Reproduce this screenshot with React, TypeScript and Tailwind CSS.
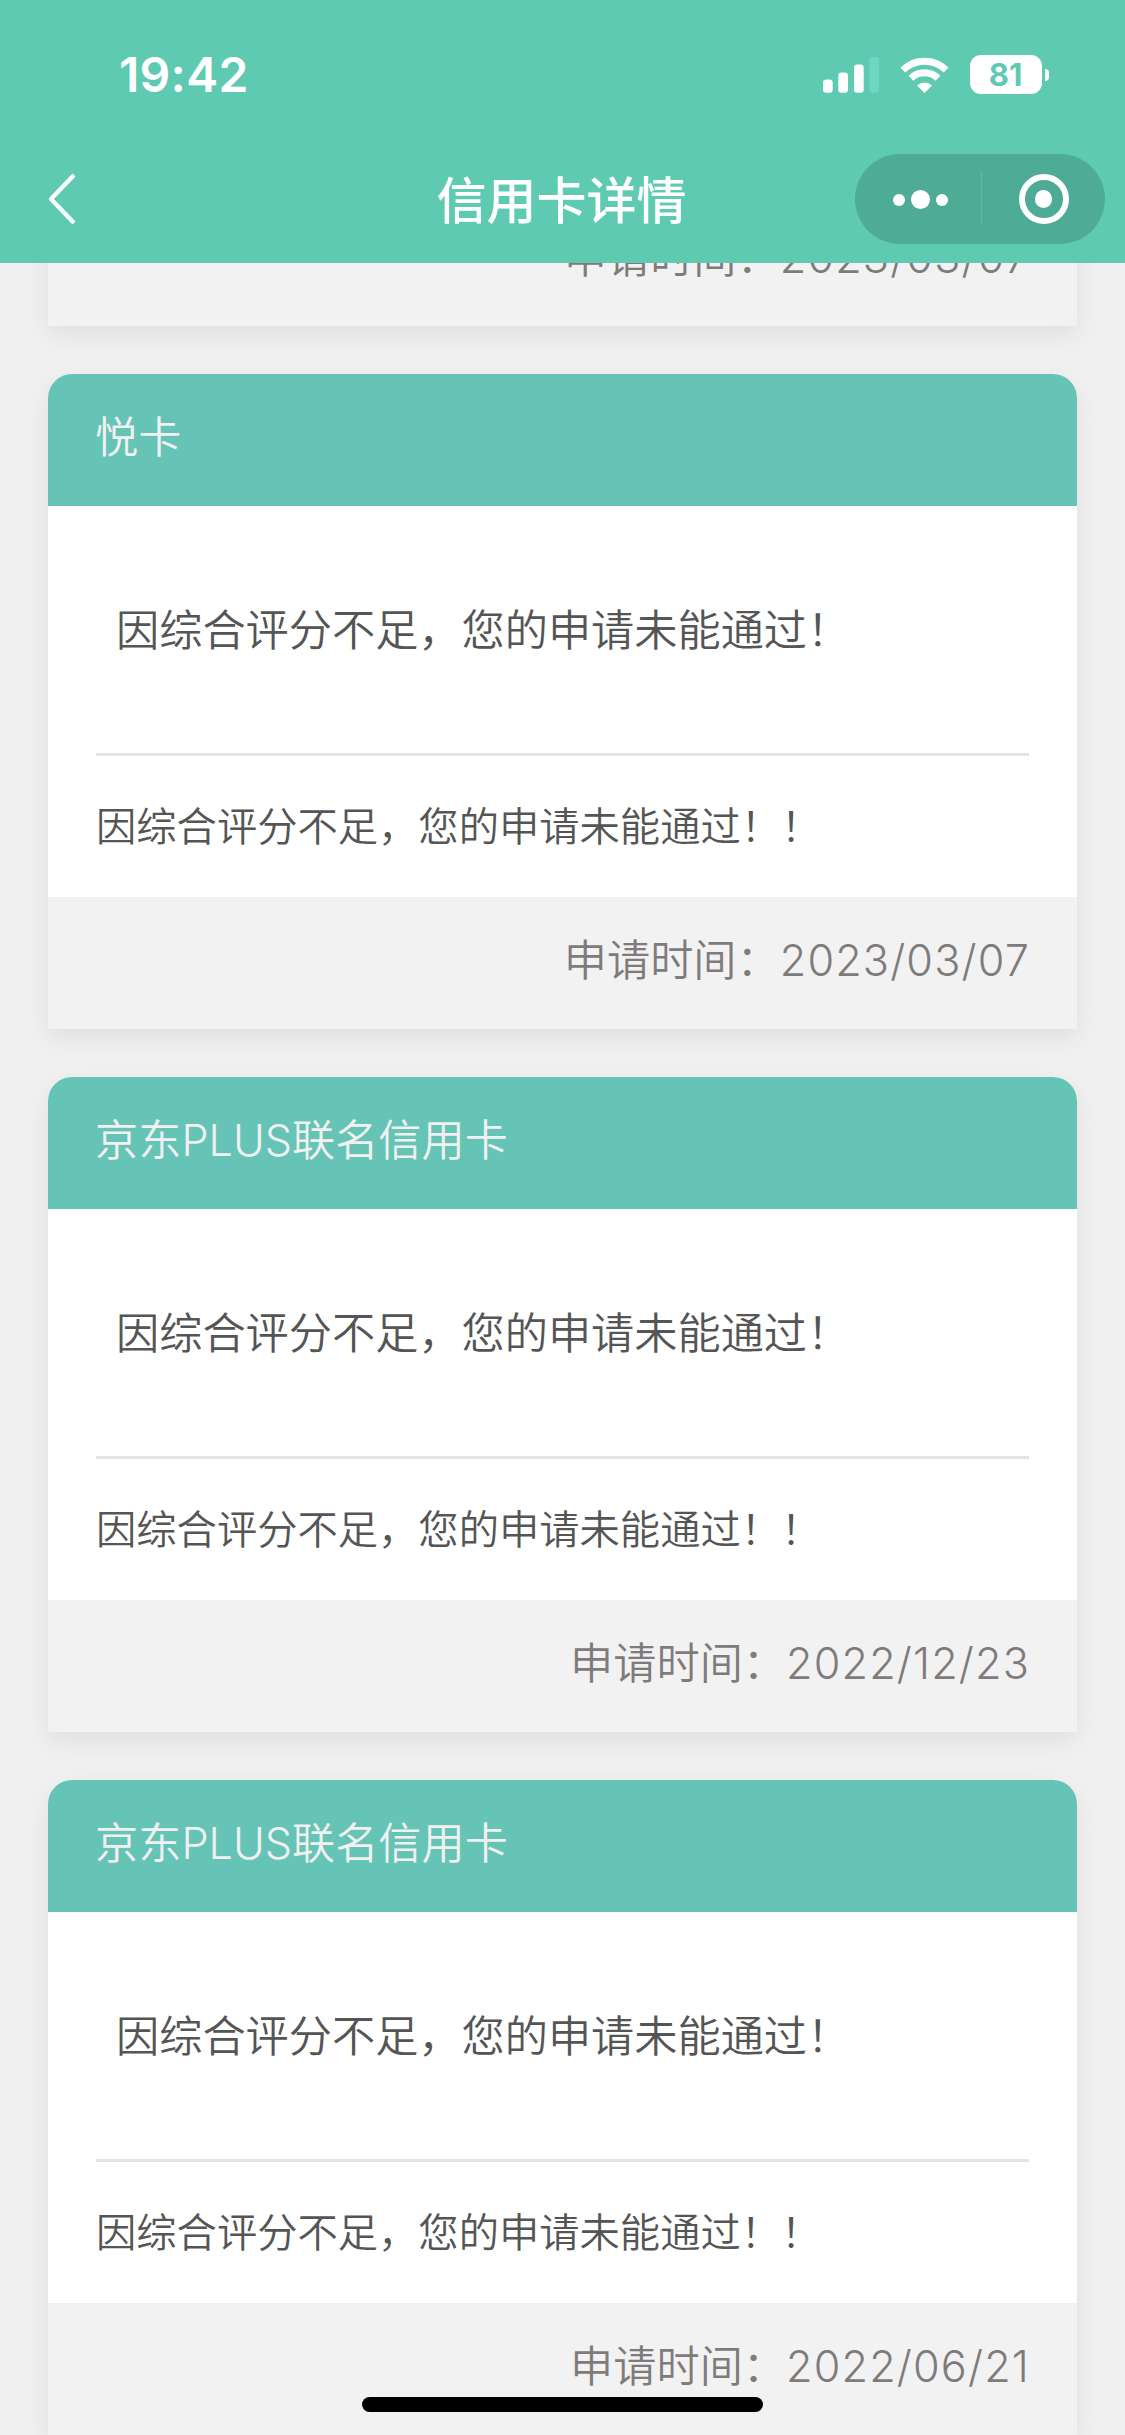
type Application = { title: string; date: string };

const applications: Application[] = [
  { title: "悦卡", date: "2023/03/07" },
  { title: "京东PLUS联名信用卡", date: "2022/12/23" },
  { title: "京东PLUS联名信用卡", date: "2022/06/21" },
];

function SignalIcon() {
  return (
    <svg width="56" height="36" viewBox="0 0 56 36" fill="#fff">
      <rect x="0" y="22.5" width="9.7" height="13.2" rx="3" />
      <rect x="15.3" y="15.5" width="9.7" height="20.2" rx="3" />
      <rect x="31" y="7.5" width="9.7" height="28.2" rx="3" />
      <rect x="46.3" y="0" width="9.7" height="35.7" rx="3" fill="#6fd6c1" />
    </svg>
  );
}

function WifiIcon() {
  return (
    <svg width="49" height="36" viewBox="0 0 49 36" fill="none">
      <path d="M2.9 12.9 A31 31 0 0 1 46.1 12.9" stroke="#fff" strokeWidth="7" />
      <path d="M11 21.3 A19.4 19.4 0 0 1 38 21.3" stroke="#fff" strokeWidth="7" />
      <path d="M24.5 36 L17 28.5 A10.8 10.8 0 0 1 32 28.5 Z" fill="#fff" />
    </svg>
  );
}

function StatusBar() {
  return (
    <div className="flex h-[150px] items-start justify-between pr-[76px] pl-[119px]">
      <div className="mt-[46px] font-[Inter] text-[48px] leading-[58px] font-semibold tracking-[0.3px] text-white">
        19:42
      </div>
      <div className="mt-[55px] flex h-[39px] items-center">
        <SignalIcon />
        <div className="ml-[21px]">
          <WifiIcon />
        </div>
        <div className="ml-[21px] flex h-[39px] w-[72px] items-center justify-center rounded-[11px] bg-white pr-px font-[Inter] text-[31px] leading-none font-bold text-[#5ecab2]">
          81
        </div>
        <div className="ml-[3px] h-[12px] w-[4px] rounded-r-full bg-white" />
      </div>
    </div>
  );
}

function NavBar() {
  return (
    <div className="grid h-[98px] grid-cols-[1fr_auto_1fr] items-center">
      <svg className="ml-[47px]" width="30" height="52" viewBox="0 0 30 52" fill="none" stroke="#fff" strokeWidth="4.2">
        <path d="M27 2 L4 26 L27 50" strokeLinejoin="round" />
      </svg>
      <h1 className="pt-[3px] pr-[2px] text-[50px] leading-[70px] font-medium text-white">信用卡详情</h1>
      <div className="mr-[20px] flex h-[90px] w-[250px] items-center justify-self-end rounded-full bg-[#4dab96]">
        <div className="flex w-[126px] items-center justify-center gap-[6px] pt-px pl-[5px]">
          <span className="size-[12px] rounded-full bg-white" />
          <span className="size-[18.5px] rounded-full bg-white" />
          <span className="size-[12px] rounded-full bg-white" />
        </div>
        <span className="h-[54px] w-px bg-[#62b8a6]" />
        <div className="flex flex-1 items-center justify-center">
          <span className="flex size-[50px] items-center justify-center rounded-full border-[6px] border-white">
            <span className="size-[17.5px] rounded-full bg-white" />
          </span>
        </div>
      </div>
    </div>
  );
}

function CardFooter({ date }: { date: string }) {
  return (
    <div className="h-[132px] bg-[#f2f2f2] px-[48px] text-right text-[43.2px] leading-[126px] font-[350] text-[#807b7b]">
      申请时间：<span className="-mr-px font-light tracking-[1.15px]">{date}</span>
    </div>
  );
}

function ApplicationCard({ title, date }: Application) {
  return (
    <article className="h-[655px] w-[1029px] shrink-0 rounded-t-[24px] bg-white shadow-[0_9px_24px_rgba(0,0,0,0.07)]">
      <h2 className="h-[132px] rounded-t-[24px] bg-[#65c4b6] px-[47px] text-[43.2px] leading-[126px] font-[350] text-[#f1f1f1]">
        {title.split(/([A-Z]+)/).map((part, i) => (
          <span key={i} className={i % 2 ? "font-light" : ""}>
            {part}
          </span>
        ))}
      </h2>
      <div className="h-[391px] px-[48px] font-[350] text-[#555]">
        <p className="h-[250px] border-b-[3px] border-[#e3e3e3] pl-[20px] text-[43.2px] leading-[249px]">
          因综合评分不足，您的申请未能通过！
        </p>
        <p className="text-[40.3px] leading-[142px]">因综合评分不足，您的申请未能通过！！</p>
      </div>
      <CardFooter date={date} />
    </article>
  );
}

export default function App() {
  return (
    <div className="relative flex h-[2435px] w-[1125px] flex-col overflow-hidden bg-[#f0f0f0] font-[Inter,'Noto_Sans_CJK_SC',sans-serif]">
      <header className="z-10 h-[263px] shrink-0 bg-[#5ecab2]">
        <StatusBar />
        <NavBar />
      </header>
      <main className="-mt-[69px] flex flex-col items-center gap-[48px]">
        <article className="w-[1029px] shadow-[0_9px_24px_rgba(0,0,0,0.07)]">
          <CardFooter date="2023/03/07" />
        </article>
        {applications.map((item, i) => (
          <ApplicationCard key={i} {...item} />
        ))}
      </main>
      <div className="absolute bottom-[23px] left-[362px] h-[15px] w-[401px] rounded-full bg-black" />
    </div>
  );
}
